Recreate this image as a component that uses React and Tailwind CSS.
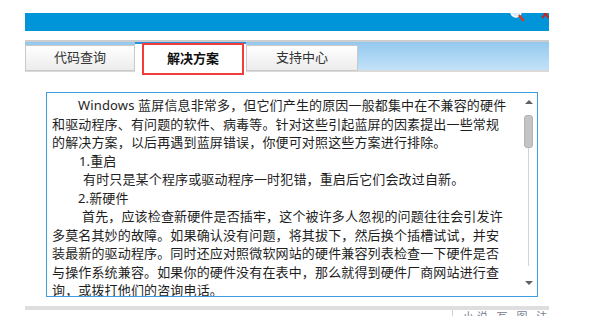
import React from 'react'

const lines = [
  { pad: 'pl-[26px]', text: 'Windows 蓝屏信息非常多，但它们产生的原因一般都集中在不兼容的硬件' },
  { pad: '', text: '和驱动程序、有问题的软件、病毒等。针对这些引起蓝屏的因素提出一些常规' },
  { pad: '', text: '的解决方案，以后再遇到蓝屏错误，你便可对照这些方案进行排除。' },
  { pad: 'pl-[27px]', text: '1.重启' },
  { pad: 'pl-[31px]', text: '有时只是某个程序或驱动程序一时犯错，重启后它们会改过自新。' },
  { pad: 'pl-[26px]', text: '2.新硬件' },
  { pad: 'pl-[30px]', text: '首先，应该检查新硬件是否插牢，这个被许多人忽视的问题往往会引发许' },
  { pad: '', text: '多莫名其妙的故障。如果确认没有问题，将其拔下，然后换个插槽试试，并安' },
  { pad: '', text: '装最新的驱动程序。同时还应对照微软网站的硬件兼容列表检查一下硬件是否' },
  { pad: '', text: '与操作系统兼容。如果你的硬件没有在表中，那么就得到硬件厂商网站进行查' },
  { pad: '', text: '询，或拨打他们的咨询电话。' },
]

function Tab({ label }) {
  return (
    <div className="mt-[3px] flex h-[26px] items-center justify-center border border-[#c9c9c9] bg-gradient-to-b from-[#ffffff] to-[#ececec] text-[13px] text-[#333]">
      {label}
    </div>
  )
}

function App() {
  return (
    <div className="relative h-[328px] w-[600px] overflow-hidden bg-white font-['Noto_Sans','Noto_Sans_CJK_SC',sans-serif]">
      <div className="ml-[25px] w-[524px] pt-[13px]">
        {/* title bar */}
        <div className="relative h-[18px] overflow-hidden bg-[#0095d9]">
          <svg className="absolute left-[484px] top-[-7px]" width="16" height="16" viewBox="0 0 16 16">
            <circle cx="7" cy="6" r="5" fill="#d8ecfb" stroke="#ffffff" strokeWidth="1.5" />
            <line x1="10.5" y1="10" x2="14" y2="14" stroke="#d23a26" strokeWidth="2.6" strokeLinecap="round" />
          </svg>
          <svg className="absolute left-[516px] top-[-4px]" width="9" height="10" viewBox="0 0 9 10">
            <line x1="1" y1="1" x2="8" y2="9" stroke="#c0281c" strokeWidth="2" />
            <line x1="8" y1="1" x2="1" y2="9" stroke="#c0281c" strokeWidth="2" />
          </svg>
        </div>
        <div className="h-[9px]" />
        <div className="h-[2px] bg-[#cdcdcd]" />

        {/* tab strip */}
        <div className="flex h-[28px] items-start bg-gradient-to-b from-[#93c8ee] to-[#c2e2f8]">
          <div className="w-[110px]">
            <Tab label="代码查询" />
          </div>
          <div className="relative z-10 h-[31px] w-[111px] border-t-2 border-[#2a90dc] bg-white">
            <div className="absolute bottom-[-2px] left-[7px] right-[2px] top-[-1px] flex items-center justify-center border-2 border-[#f23c3c] text-[13px] font-bold text-[#111]">
              解决方案
            </div>
          </div>
          <div className="w-[112px]">
            <Tab label="支持中心" />
          </div>
        </div>
        <div className="h-[2px] bg-[#dadada]" />

        {/* content box */}
        <div className="ml-[21px] mt-[20px] flex h-[205px] w-[492px] border border-[#3d9fe2] bg-white">
          <div className="flex-1 overflow-hidden pl-[5px] pt-[3px] text-[13px] leading-[18.5px] tracking-[0.15px] text-[#1e1e1e]">
            {lines.map((line, i) => (
              <div key={i} className={`whitespace-nowrap ${line.pad}`}>
                {line.text}
              </div>
            ))}
          </div>
          <div className="flex w-[17px] flex-col items-center pt-[7px]">
            <div className="h-0 w-0 border-x-[4px] border-b-[4px] border-x-transparent border-b-[#606060]" />
            <div className="mt-[11px] h-[33px] w-[9px] rounded-[3px] border border-[#b4b4b4] bg-[#c4c4c4]" />
            <div className="h-[118px] w-px bg-[#d4d4d4]" />
            <div className="mt-[15px] h-0 w-0 border-x-[4px] border-t-[4px] border-x-transparent border-t-[#606060]" />
          </div>
        </div>

        <div className="mt-[9px] h-[4px] bg-[#dedede]" />
        <div className="flex h-[6px]">
          <div className="w-[433px]" />
          <div className="w-px bg-[#d0d0d0]" />
          <div className="h-[6px] overflow-hidden pl-[10px] text-[11px] leading-[16px] text-[#7a8090]">
            <div className="mt-[-1px] whitespace-nowrap tracking-[3px]">小说 写 图 法</div>
          </div>
        </div>
      </div>
    </div>
  )
}

export default App
